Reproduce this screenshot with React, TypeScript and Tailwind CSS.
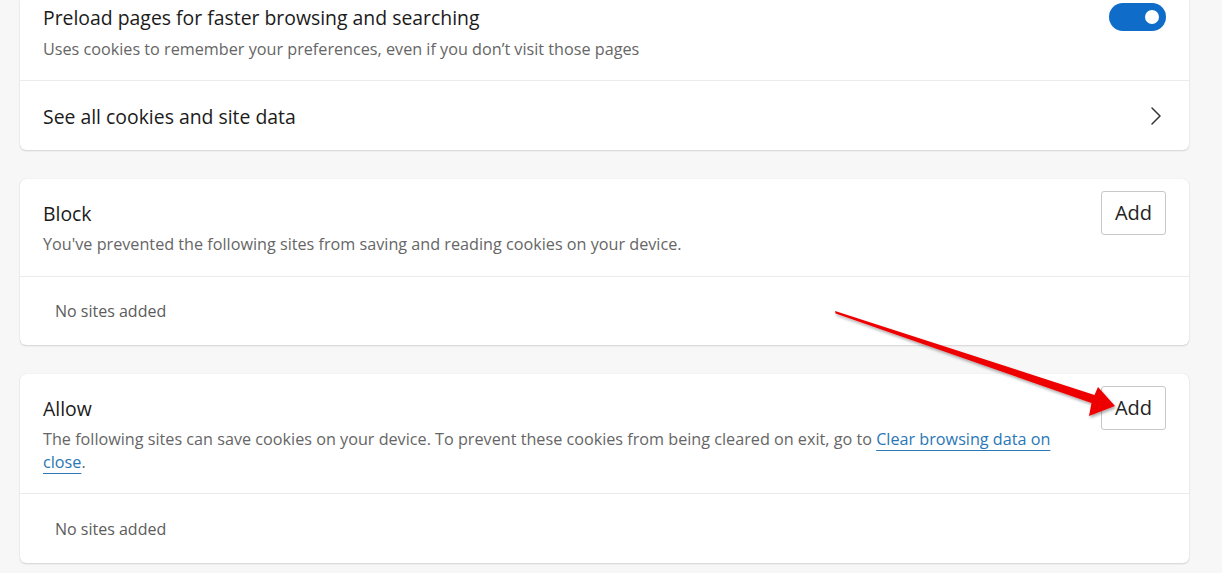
import React from "react";

function AddButton() {
  return (
    <button className="w-[65px] h-[44px] shrink-0 rounded-[3px] border border-[#c8c8c8] bg-white text-[20px] leading-none text-[#242424] flex items-center justify-center">
      Add
    </button>
  );
}

export default function App() {
  return (
    <div
      className="relative w-[1222px] h-[573px] overflow-hidden bg-[#f7f7f7] pl-5"
      style={{ fontFamily: '"Open Sans", "Noto Sans", sans-serif' }}
    >
      <div className="w-[1169px] flex flex-col gap-[29px]">
        {/* Card 1 */}
        <div className="bg-white rounded-b-[6px] shadow-[0_1px_2px_rgba(0,0,0,0.14),0_0_1px_rgba(0,0,0,0.12)]">
          <div className="h-[80px] flex justify-between pl-[23px] pr-[23px] pt-[4px]">
            <div className="flex flex-col">
              <div className="text-[19.4px] leading-[28px] text-[#1b1b1b]">
                Preload pages for faster browsing and searching
              </div>
              <div className="text-[16.2px] leading-[22px] mt-[6px] text-[#666666]">
                Uses cookies to remember your preferences, even if you don’t visit those pages
              </div>
            </div>
            <div className="mt-[-1px] w-[57px] h-[28px] rounded-full bg-[#0f6cc9] flex items-center justify-end pr-[7px]">
              <div className="w-[14px] h-[14px] rounded-full bg-white" />
            </div>
          </div>
          <div className="border-t border-[#ebebeb] h-[70px] flex items-center justify-between pl-[23px] pr-[27px]">
            <div className="text-[19.4px] leading-[28px] text-[#1b1b1b] pt-[2px]">
              See all cookies and site data
            </div>
            <svg width="12" height="20" viewBox="0 0 12 20" fill="none">
              <path d="M2 2 L10 10 L2 18" stroke="#333" strokeWidth="1.5" strokeLinecap="round" strokeLinejoin="round" />
            </svg>
          </div>
        </div>

        {/* Card 2 */}
        <div className="bg-white rounded-[6px] shadow-[0_1px_2px_rgba(0,0,0,0.14),0_0_1px_rgba(0,0,0,0.12)]">
          <div className="h-[97px] flex justify-between pl-[23px] pr-[23px] pt-[12px]">
            <div className="flex flex-col pt-[9px]">
              <div className="text-[19.4px] leading-[28px] text-[#1b1b1b]">Block</div>
              <div className="text-[16.2px] leading-[22px] mt-[5px] text-[#666666]">
                You've prevented the following sites from saving and reading cookies on your device.
              </div>
            </div>
            <AddButton />
          </div>
          <div className="border-t border-[#ebebeb] h-[69px] flex items-center pl-[35px]">
            <div className="text-[16px] leading-[22px] text-[#5c5c5c]">No sites added</div>
          </div>
        </div>

        {/* Card 3 */}
        <div className="bg-white rounded-[6px] shadow-[0_1px_2px_rgba(0,0,0,0.14),0_0_1px_rgba(0,0,0,0.12)]">
          <div className="h-[119px] flex justify-between pl-[23px] pr-[23px] pt-[12px]">
            <div className="flex flex-col pt-[9px] w-[1040px]">
              <div className="text-[19.4px] leading-[28px] text-[#1b1b1b]">Allow</div>
              <div className="text-[16.2px] leading-[23px] mt-[5px] text-[#666666]">
                The following sites can save cookies on your device. To prevent these cookies from being cleared on exit, go to{" "}
                <a className="text-[#2a77b5] underline decoration-[#2a77b5] underline-offset-[5px]">
                  Clear browsing data on close
                </a>
                .
              </div>
            </div>
            <AddButton />
          </div>
          <div className="border-t border-[#ebebeb] h-[70px] flex items-center pl-[35px]">
            <div className="text-[16px] leading-[22px] text-[#5c5c5c]">No sites added</div>
          </div>
        </div>
      </div>

      {/* Red arrow annotation */}
      <svg className="absolute inset-0 pointer-events-none" width="1222" height="573" viewBox="0 0 1222 573">
        <defs>
          <filter id="sh" x="-10%" y="-10%" width="120%" height="130%">
            <feDropShadow dx="1" dy="2" stdDeviation="1.5" floodColor="#000" floodOpacity="0.35" />
          </filter>
        </defs>
        <g filter="url(#sh)">
          <polygon
            points="835,311 835.6,313.5 1091.5,403 1089,416 1115,406 1098,387 1094.5,395"
            fill="#ee0000"
          />
        </g>
      </svg>
    </div>
  );
}
